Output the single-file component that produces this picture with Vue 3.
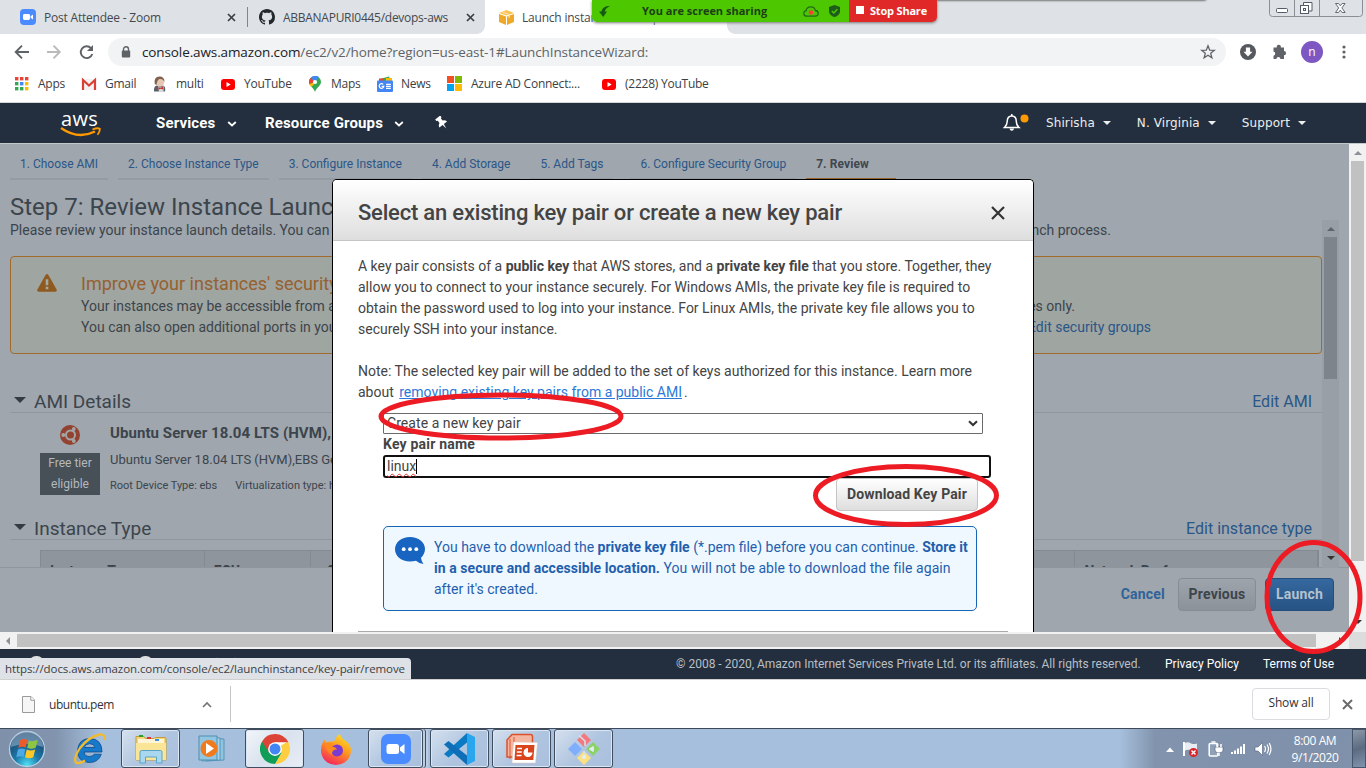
<script setup>
const bookmarks = [
  { t: 'Apps', i: 'apps', w: 67 },
  { t: 'Gmail', i: 'gmail', w: 71 },
  { t: 'multi', i: 'jenkins', w: 68 },
  { t: 'YouTube', i: 'yt', w: 87 },
  { t: 'Maps', i: 'maps', w: 70 },
  { t: 'News', i: 'news', w: 70 },
  { t: 'Azure AD Connect:...', i: 'ms', w: 154 },
  { t: '(2228) YouTube', i: 'yt', w: 120 }
]
const steps = ['1. Choose AMI', '2. Choose Instance Type', '3. Configure Instance', '4. Add Storage', '5. Add Tags', '6. Configure Security Group', '7. Review']
const appColors = ['#ea4335', '#ea4335', '#ea4335', '#34a853', '#4285f4', '#fbbc05', '#34a853', '#34a853', '#fbbc05']
const columns = [
  { t: 'Instance Type', w: 164 },
  { t: 'ECUs', w: 106 },
  { t: 'vCPUs', w: 766 },
  { t: 'Network Performance', w: 243 }
]
</script>

<template>
  <div class="screen">
    <header class="tabs">
      <div class="tab t1">
        <svg width="16" height="16"><rect width="16" height="16" rx="4" fill="#4a8cff"/><rect x="3" y="5" width="7" height="6" rx="1.4" fill="#fff"/><path d="M10.6 7.2 13 5.4v5.2l-2.4-1.8z" fill="#fff"/></svg>
        <span class="ttl">Post Attendee - Zoom</span>
        <svg class="tx" width="9" height="9"><path d="M1 1l7 7M8 1l-7 7" stroke="#3c4043" stroke-width="1.7"/></svg>
      </div>
      <div class="tab t2">
        <svg width="16" height="16" viewBox="0 0 16 16"><path fill="#24292e" d="M8 0C3.58 0 0 3.58 0 8c0 3.54 2.29 6.53 5.47 7.59.4.07.55-.17.55-.38 0-.19-.01-.82-.01-1.49-2.01.37-2.53-.49-2.69-.94-.09-.23-.48-.94-.82-1.13-.28-.15-.68-.52-.01-.53.63-.01 1.08.58 1.23.82.72 1.21 1.87.87 2.33.66.07-.52.28-.87.51-1.07-1.78-.2-3.64-.89-3.64-3.95 0-.87.31-1.59.82-2.15-.08-.2-.36-1.02.08-2.12 0 0 .67-.21 2.2.82.64-.18 1.32-.27 2-.27s1.36.09 2 .27c1.53-1.04 2.2-.82 2.2-.82.44 1.1.16 1.92.08 2.12.51.56.82 1.27.82 2.15 0 3.07-1.87 3.75-3.65 3.95.29.25.54.73.54 1.48 0 1.07-.01 1.93-.01 2.2 0 .21.15.46.55.38A8.01 8.01 0 0 0 16 8c0-4.42-3.58-8-8-8z"/></svg>
        <span class="ttl gh">ABBANAPURI0445/devops-aws</span>
        <svg class="tx" width="9" height="9"><path d="M1 1l7 7M8 1l-7 7" stroke="#3c4043" stroke-width="1.7"/></svg>
      </div>
      <div class="tab t3">
        <svg width="15" height="15"><path d="M0 3 7.5 0 15 3 7.5 5.5z" fill="#f9c451"/><path d="M0 4l7 2.4V15L0 12z" fill="#f0a927"/><path d="M15 4 8 6.4V15l7-3z" fill="#f0a927"/><path d="M4 1.5l7 3v3l-1.5.6V5L2.6 2.2z" fill="#fbe0a6"/></svg>
        <span class="ttl">Launch instance wizard | EC2 Man</span>
      </div>
      <div class="peek"></div>
      <div class="share">
        <div class="green">
          <svg width="11" height="11"><path d="M11 0C6 0 3 2 2.6 5.5H0L4.2 11 8 5.5H5.8C6 3.500 8 1.500 11 0z" fill="#155c12"/></svg>
          <b>You are screen sharing</b>
          <svg class="cloud" width="16" height="11"><path d="M4 10.200C1.500 10.200.8 8.500.8 7.500c0-1.500 1-2.500 2.200-2.600C3.300 2.500 5.200.8 7.800.8c2.500 0 4.200 1.500 4.600 3.700 1.800.2 2.800 1.400 2.800 2.900 0 1.600-1.200 2.800-3 2.800z" fill="none" stroke="#256b1c" stroke-width="1.300"/><circle cx="8" cy="6.500" r="2.200" fill="#ff3b3b"/></svg>
          <svg width="11" height="12"><path d="M5.500 0 11 2v4.200C11 9 8.500 11.200 5.500 12 2.500 11.200 0 9 0 6.200V2z" fill="#1f5d1a"/><path d="M2.800 6l2 2 3.500-3.800" fill="none" stroke="#4cc700" stroke-width="1.500"/></svg>
        </div>
        <div class="red"><i></i><b>Stop Share</b></div>
      </div>
      <div class="winctl">
        <svg width="94" height="17"><path d="M.5 0v13.500q0 3 3 3h87q3 0 3-3V0M25.500 0v16M50.500 0v16" fill="none" stroke="#8b8f95"/><rect x="7.500" y="8.500" width="11" height="4" rx="1" fill="#fff" stroke="#555b66"/><path d="M34.500 5V2.500h8.500v8.500h-3" fill="#fff" stroke="#555b66"/><rect x="31.500" y="5.500" width="8" height="8" fill="#fff" stroke="#555b66"/><rect x="34.500" y="8.500" width="2" height="2" fill="#fff" stroke="#555b66"/><path d="M66.500 3.500h3l1.800 2.300 1.800-2.300h3l-3.200 4.400 3.200 4.600h-3l-1.800-2.400-1.800 2.400h-3l3.200-4.600z" fill="#fff" stroke="#555b66" stroke-width=".9"/></svg>
      </div>
    </header>

    <div class="toolbar">
      <svg class="nv" width="90" height="16"><g fill="none" stroke-width="1.900"><path d="M15 8H2M8 1.700 1.700 8 8 14.300" stroke="#5f6368"/><path d="M33 8h12.500M39.500 1.700 45.800 8l-6.300 6.300" stroke="#bababa"/><path d="M77 4.200A5.900 5.900 0 1 0 78.300 10" stroke="#5f6368"/></g><path d="M79 1v6h-6z" fill="#5f6368"/></svg>
      <div class="omni">
        <svg width="10" height="12"><path d="M2.500 5V3.300a2.500 2.500 0 0 1 5 0V5" fill="none" stroke="#5f6368" stroke-width="1.400"/><rect x=".8" y="4.500" width="8.400" height="7" rx="1" fill="#5f6368"/></svg>
        <span class="url">console.aws.amazon.com<em>/ec2/v2/home?region=us-east-1#LaunchInstanceWizard:</em></span>
        <svg width="16" height="16"><path d="M8 1.800l1.700 4.400 4.600.2-3.600 2.900 1.200 4.500L8 11.300l-3.900 2.500 1.200-4.500L1.700 6.400l4.600-.2z" fill="none" stroke="#5f6368" stroke-width="1.300"/></svg>
      </div>
      <svg class="ext" width="112" height="24"><circle cx="12" cy="12" r="8" fill="#55585c"/><path d="M9.900 7.500h4.200v4.300h2.400L12 16.500l-4.500-4.700h2.400z" fill="#fff"/><path d="M38 7.500h2.800a2.100 2.100 0 1 1 4 0H48v3.600a2.100 2.100 0 1 1 0 4.200V19h-3.600a2 2 0 0 0-4 0H37.500v-3.300a2.200 2.200 0 0 0 0-4.300V7.500z" fill="#5f6368"/><circle cx="76" cy="12" r="11" fill="#7e57c2"/><circle cx="108" cy="7" r="1.600" fill="#5f6368"/><circle cx="108" cy="12" r="1.600" fill="#5f6368"/><circle cx="108" cy="17" r="1.600" fill="#5f6368"/><text x="76" y="16" text-anchor="middle" class="av">n</text></svg>
    </div>

    <nav class="bookmarks">
      <div v-for="(b, k) in bookmarks" :key="k" class="bm" :style="{ width: b.w + 'px' }">
        <svg width="16" height="16">
          <g v-if="b.i === 'apps'"><rect v-for="(c, n) in appColors" :key="n" :x="1 + (n % 3) * 5" :y="1 + Math.floor(n / 3) * 5" width="3.400" height="3.400" :fill="c"/></g>
          <g v-else-if="b.i === 'gmail'"><rect x="1" y="3" width="14" height="11" fill="#f2f2f2"/><path d="M2 14V4l6 5.500L14 4v10" fill="none" stroke="#d93f34" stroke-width="2.200"/></g>
          <g v-else-if="b.i === 'jenkins'"><path d="M2 15.500Q1.500 10 5 9.500h6q3 1 2 6z" fill="#59606b"/><ellipse cx="8" cy="5.800" rx="4.300" ry="5" fill="#e6c8b2"/><path d="M2.800 8Q1.500.8 7.500.5q5 0 5 5.500Q11 2.500 7.500 3 5 4 4.500 9z" fill="#80604f"/><path d="M6 10l2.500 1.500 3-1.500v6H7z" fill="#d8d8d8"/><path d="M6.500 11l2 1 2.500-1.500v3l-2.500-.8-2 1z" fill="#c9332b"/></g>
          <g v-else-if="b.i === 'yt'"><rect x="1" y="3" width="14" height="11" rx="3" fill="#f00"/><path d="M6.500 6v5L10.700 8.500z" fill="#fff"/></g>
          <g v-else-if="b.i === 'maps'"><path d="M2 6a6 6 0 0 1 12 0c0 4-4.500 5-6 10C6.500 11 2 10 2 6z" fill="#34a853"/><path d="M8 0a6 6 0 0 0-4.500 2L8 6l4-5A6 6 0 0 0 8 0z" fill="#4285f4"/><path d="M3.500 2A6 6 0 0 0 2.300 8L8 6z" fill="#ea4335"/><path d="M2.300 8Q3 9.500 4.500 11L9 6z" fill="#fbbc04"/><circle cx="8" cy="6" r="2.100" fill="#fff"/></g>
          <g v-else-if="b.i === 'news'"><path d="M3 3l9-2.500L14 5H3z" fill="#34a853"/><path d="M9 2h6v4H9z" fill="#fbbc04"/><path d="M2 2.500h5V6H2z" fill="#ea4335"/><rect y="4.500" width="16" height="11.500" rx="1" fill="#4285f4"/><path d="M6.200 8.400A2.300 2.300 0 1 0 6.800 10.300H4.700M9 8.300h4.800M9 10.300h4.800M9 12.300h4.800" stroke="#fff" stroke-width="1.200" fill="none"/></g>
          <g v-else><path d="M0 0h7v7H0z" fill="#f25022"/><path d="M8 0h7v7H8z" fill="#7fba00"/><path d="M0 8h7v7H0z" fill="#00a4ef"/><path d="M8 8h7v7H8z" fill="#ffb900"/></g>
        </svg>
        <span>{{ b.t }}</span>
      </div>
    </nav>

    <nav class="aws">
      <div class="logo"><span>aws</span><svg width="42" height="12"><path d="M1 1q17 12 34 3.500" fill="none" stroke="#f90" stroke-width="2.300"/><path d="M32.500 2.500q5-2 7.300-.8 .3 2.800-2.300 6" fill="none" stroke="#f90" stroke-width="1.800"/></svg></div>
      <b class="sv">Services</b>
      <svg class="c1" width="10" height="6"><path d="M1.200 1 5 4.500 8.800 1" fill="none" stroke="#fff" stroke-width="1.700"/></svg>
      <b class="rg">Resource Groups</b>
      <svg class="c2" width="10" height="6"><path d="M1.200 1 5 4.500 8.800 1" fill="none" stroke="#fff" stroke-width="1.700"/></svg>
      <svg width="14" height="14"><path transform="rotate(-38 7 7)" d="M3.800 0h6.400v2L9 2.700v2.800q2.500 1 2.800 3.500H7.800L7 14l-.8-5H2.200Q2.500 6.500 5 5.500V2.700L3.800 2z" fill="#fff"/></svg>
      <div class="rt">
        <svg class="bell" width="30" height="20"><path d="M1.500 14.500h14.500q-2.700-2.500-2.700-6 0-5.500-4.500-5.500T4.200 8.500q0 3.500-2.700 6z" fill="none" stroke="#fff" stroke-width="1.500"/><path d="M8.800 1v2" stroke="#fff" stroke-width="1.500"/><path d="M6.500 15.500h4.600q-.5 2.300-2.300 2.300t-2.300-2.300z" fill="#fff"/><circle cx="21.500" cy="5.500" r="4" fill="#f90"/></svg>
        <span>Shirisha</span><i></i><span>N. Virginia</span><i></i><span>Support</span><i></i>
      </div>
    </nav>

    <main class="page">
      <div class="dim">
        <div class="steps"><span v-for="(s, k) in steps" :key="k" :class="{ cur: k === 6, sec6: k === 5 }">{{ s }}</span></div>
        <h1>Step 7: Review Instance Launch</h1>
        <p class="sub"><span>Please review your instance launch details. You can go</span><span class="tail">launch process.</span></p>
        <div class="scroller">
          <div class="warn">
            <svg width="20" height="18"><path d="M8.600 1Q10-.8 11.400 1L19.600 15.500q.6 2-1.300 2.300H1.700Q-.2 17.500.4 15.500z" fill="#8f5a20"/><path d="M8.700 5.200h2.600v6H8.700zM8.700 12.700h2.600v2.600H8.700z" fill="#a3aaa5"/></svg>
            <div class="wt">
              <h2>Improve your instances' security.</h2>
              <div class="row"><span>Your instances may be accessible from any</span><span class="end1">addresses only.</span></div>
              <div class="row"><span>You can also open additional ports in your</span><span class="end2">Edit security groups</span></div>
            </div>
          </div>
          <div class="sec s1"><i></i><h3>AMI Details</h3><a>Edit AMI</a></div>
          <div class="ami">
            <div class="badge">
              <svg width="20" height="20"><circle cx="10" cy="10" r="10" fill="#93422f"/><circle cx="10.500" cy="10" r="4.500" fill="none" stroke="#a3a5a7" stroke-width="2"/><circle cx="3.300" cy="10" r="1.900" fill="#a3a5a7"/><circle cx="13.800" cy="4" r="1.900" fill="#a3a5a7"/><circle cx="13.800" cy="16" r="1.900" fill="#a3a5a7"/></svg>
              <div>Free tier<br>eligible</div>
            </div>
            <div class="info">
              <b>Ubuntu Server 18.04 LTS (HVM),</b>
              <p>Ubuntu Server 18.04 LTS (HVM),EBS General</p>
              <small><span>Root Device Type: ebs</span><span>Virtualization type: hvm</span></small>
            </div>
          </div>
          <div class="sec s2"><i></i><h3>Instance Type</h3><a>Edit instance type</a></div>
          <div class="thead"><b v-for="c in columns" :key="c.t" :style="{ width: c.w + 'px' }">{{ c.t }}</b></div>
        </div>
        <div class="actions"><a>Cancel</a><span class="btn">Previous</span><span class="btn blue">Launch</span></div>
        <div class="inscroll"><i class="up"></i><div></div><i class="dn"></i></div>
      </div>
      <div class="vscroll"><i class="up"></i><div></div><i class="dn"></i></div>

      <section class="modal">
        <div class="mh"><h2>Select an existing key pair or create a new key pair</h2><svg width="14" height="14"><path d="M1 1l12 12M13 1 1 13" stroke="#333" stroke-width="2.200"/></svg></div>
        <div class="mb">
          <p>A key pair consists of a <b>public key</b> that AWS stores, and a <b>private key file</b> that you store. Together, they<br>allow you to connect to your instance securely. For Windows AMIs, the private key file is required to<br>obtain the password used to log into your instance. For Linux AMIs, the private key file allows you to<br>securely SSH into your instance.</p>
          <p class="note">Note: The selected key pair will be added to the set of keys authorized for this instance. Learn more<br>about <a>removing existing key pairs from a public AMI</a><span class="dot">.</span></p>
          <div class="form">
            <div class="select"><span>Create a new key pair</span><svg width="10" height="7"><path d="M1 1.200l4 3.800 4-3.800" fill="none" stroke="#333" stroke-width="2"/></svg></div>
            <label>Key pair name</label>
            <div class="input"><span>linux</span><i></i></div>
            <span class="dl">Download Key Pair</span>
            <div class="tip">
              <svg width="30" height="28"><path d="M15 0C23.500 0 30 5.300 30 12c0 3.500-1.600 6.500-4 8.700q.3 3.500 2.500 6.300-4.500-.5-7.500-3.300Q18 24.500 15 24.500C6.500 24.500 0 19 0 12.200 0 5.300 6.500 0 15 0z" fill="#1765c0"/><circle cx="8.700" cy="12.200" r="1.900" fill="#fff"/><circle cx="15" cy="12.200" r="1.900" fill="#fff"/><circle cx="21.300" cy="12.200" r="1.900" fill="#fff"/></svg>
              <p>You have to download the <b>private key file</b> (*.pem file) before you can continue. <b>Store it</b><br><span class="l2"><b>in a secure and accessible location.</b> You will not be able to download the file again</span><br>after it's created.</p>
            </div>
          </div>
          <hr>
        </div>
      </section>
    </main>

    <div class="hscroll"><i class="lf"></i><div></div><i class="rgt"></i><span></span></div>

    <footer class="foot">
      <div class="fl"><i></i><b>Feedback</b><i></i><b>English (US)</b></div>
      <span class="cp">© 2008 - 2020, Amazon Internet Services Private Ltd. or its affiliates. All rights reserved.</span>
      <span class="pp">Privacy Policy</span><span class="tu">Terms of Use</span>
      <div class="status">https://docs.aws.amazon.com/console/ec2/launchinstance/key-pair/remove</div>
    </footer>

    <div class="shelf">
      <svg width="13" height="17"><path d="M.5.500h8.500l3.500 3.500v12.500H.5z" fill="#f6f6f6" stroke="#9a9a9a"/><path d="M8.800.5V4.300h3.700" fill="#fff" stroke="#9a9a9a"/></svg>
      <span class="fn">ubuntu.pem</span>
      <svg class="cv" width="10" height="7"><path d="M1 6l4-4 4 4" fill="none" stroke="#757575" stroke-width="1.700"/></svg>
      <div class="sep"></div>
      <div class="showall">Show all</div>
      <svg class="sx" width="11" height="11"><path d="M1 1l9 9M10 1l-9 9" stroke="#6b6b6b" stroke-width="2"/></svg>
    </div>

    <div class="taskbar">
      <svg class="orb" width="38" height="38" viewBox="0 0 38 38">
        <defs><radialGradient id="og" cx=".5" cy=".95" r=".9"><stop offset="0" stop-color="#4fe0f5"/><stop offset=".4" stop-color="#1d78a8"/><stop offset="1" stop-color="#1c3c63"/></radialGradient></defs>
        <circle cx="19" cy="19" r="17.500" fill="url(#og)" stroke="#b8cfe0" stroke-width="1.300"/><path d="M3 17a16 16 0 0 1 32 0q-16-6-32 0z" fill="#a8c4da" opacity=".5"/>
        <path d="M12 10.500q3.500-2.500 7.300-.5l-1.600 7.700q-3.500-1.800-7.400.2z" fill="#f0592a"/><path d="M20.800 10.500q3.500 1.700 8.900-.8l-2 8q-4.500 2-8.500 0z" fill="#8fc641"/><path d="M9.900 19.500q3.500-2 7.400-.2l-1.800 7.700q-3.500-1.600-7.200.3z" fill="#4ba9e6"/><path d="M18.700 19.600q4 1.800 8.500 0l-1.900 7.600q-4 2-8.300 0z" fill="#fdc826"/>
      </svg>
      <svg class="ie" width="36" height="34" viewBox="0 0 36 34"><path d="M31 20H13q.5 4.500 5.500 4.500 3 0 4.800-2.300h7Q27.500 30.500 18.500 30.500 6.500 30 6.500 18.500 7.500 6.500 19 6.500q12 .5 12 13.500zM13.300 15.500h10.500q-.6-3.800-5.200-3.800-4.500.2-5.300 3.800z" fill="#1779c9" stroke="#0b4a8c" stroke-width=".8"/><path d="M33 8Q34.500 2 29 2.500 18 4.500 9 16 2 27 5 30.500q3 2 9-2" fill="none" stroke="#f2bb2d" stroke-width="2.300"/></svg>
      <div class="tb expl"><svg width="34" height="32" viewBox="0 0 34 32"><path d="M2 3.500h8l1.500 2H20l1-1h10q1 0 1 1V27H2z" fill="#f3d678" stroke="#c29c3a"/><path d="M4 6h26v4H4z" fill="#fdf5d6"/><path d="M2 10h30v17H2z" fill="#fae596"/><path d="M5 2h4v2H5z" fill="#25a028"/><path d="M13 4h4v2h-4z" fill="#d33"/><path d="M21 6h4v2h-4z" fill="#3a8ee6"/><path d="M6 30V19q0-1.500 1.500-1.500h19q1.500 0 1.500 1.500v11h-5.500v-6h-11v6z" fill="#a9d7ee" stroke="#5aa3c8"/></svg></div>
      <svg class="wmp" width="30" height="28" viewBox="0 0 30 28"><path d="M8 3l18 1v21L8 26z" fill="#8fc4e0" stroke="#5a94b8"/><path d="M4 2l18 1v22L4 26z" fill="#a9d5ec" stroke="#5a94b8"/><path d="M1 1h18v24H1z" fill="#91c5e0" stroke="#4e8fb5"/><circle cx="11" cy="13.500" r="8.500" fill="#f07a1e"/><path d="M8 8v11l8-5.500z" fill="#fff"/></svg>
      <div class="tb chr on"><svg width="30" height="30" viewBox="0 0 48 48"><circle cx="24" cy="24" r="24" fill="#fff"/><path d="M24 24 44.800 12A24 24 0 0 1 24 48L34 30z" fill="#ffcd40"/><path d="M24 24 3.200 12A24 24 0 0 0 24 48L34.400 30z" fill="#0f9d58"/><path d="M24 13h21.300A24 24 0 0 0 3.200 12L14.500 29.500z" fill="#db4437"/><circle cx="24" cy="24" r="11" fill="#fff"/><circle cx="24" cy="24" r="8.800" fill="#4285f4"/></svg></div>
      <svg class="ff" width="32" height="32" viewBox="0 0 32 32"><defs><linearGradient id="fg" x1=".8" y1="0" x2=".3" y2="1"><stop offset="0" stop-color="#ffe226"/><stop offset=".45" stop-color="#ff9a1f"/><stop offset="1" stop-color="#f5225d"/></linearGradient></defs><path d="M20 1q1 4 5 6.500 6 4 6 10A15 14.500 0 0 1 1 17.500Q1 11 4.500 6.500q.5 2 2 3Q8 8 11 8.500 15 9 16 5 17 2 20 1z" fill="url(#fg)"/><circle cx="17" cy="17.500" r="6" fill="#7a3bd0"/><path d="M5 11q6-3 9 1l-2 1.500q4 .5 5 3-3-.5-4 1.500-2 2 0 4-7-2-8-11z" fill="#ff8a1e"/></svg>
      <div class="tb zm"><svg width="30" height="30"><rect width="30" height="30" rx="7" fill="#4a8cff"/><rect x="5.500" y="10" width="12.500" height="10" rx="2.500" fill="#fff"/><path d="M19 13.500l4.500-3.500v10L19 16.500z" fill="#fff"/></svg></div>
      <div class="tb vs"><svg width="32" height="32" viewBox="0 0 32 32"><path d="M23 0l8 4v24l-8 4z" fill="#2aa6ee"/><path d="M23 0v9.500L4.500 24.500 0 21z" fill="#0a7ac4"/><path d="M23 32v-9.500L4.500 8 0 11.500z" fill="#0e6fb8"/></svg></div>
      <div class="tb pp2"><svg width="32" height="32" viewBox="0 0 32 32"><path d="M6 1.500h18.500q2 0 2 2V24H1V7z" fill="#f3b6a0" stroke="#d9522d" stroke-width="1.500"/><path d="M4 6v20M8 4v20" stroke="#e2552f"/><path d="M7.500 9l24 .5-2 20.500H6z" fill="#fff" stroke="#e3c6bb" stroke-width=".5"/><path d="M9.500 12h19l-1.200 15H8.500z" fill="#d9441c"/><path d="M11 15.500h5M10.800 19h5M10.600 22.500h5" stroke="#fff" stroke-width="1.500"/><path d="M22 15a4.500 4.500 0 1 0 4.500 4.500H22z" fill="#fff"/></svg></div>
      <div class="tb gt"><svg width="32" height="32" viewBox="0 0 32 32"><path d="M16 0l7 7-7 7-7-7z" fill="#f3797e"/><path d="M25 9l7 7-7 7-7-7z" fill="#8cd268"/><path d="M7 9l7 7-7 7-7-7z" fill="#7eaefc"/><path d="M16 18l7 7-7 7-7-7z" fill="#fbe180"/><path d="M11 2.500l6 5.500v5M25 13v6M21 16h5M16 18v8" fill="none" stroke="#d8e3ee" stroke-width="1.500"/><circle cx="24" cy="16" r="2" fill="#e6eef4"/><circle cx="16" cy="24" r="2" fill="#e6eef4"/></svg></div>
      <svg class="tray" width="112" height="18"><path d="M0 12l4-4.500 4 4.500z" fill="#fff"/><path d="M18 2v14" stroke="#fff" stroke-width="2"/><path d="M19 3q3-1.500 6 .5 3 1 6 0v7q-3 1-6 0-3-1.500-6 0z" fill="#e8edf4"/><circle cx="27.500" cy="12.500" r="4.500" fill="#d9262b"/><path d="M25.500 10.500l4 4M29.500 10.500l-4 4" stroke="#fff" stroke-width="1.400"/><rect x="43.200" y="3.500" width="8.500" height="12.500" rx="1" fill="#8fa0b7" stroke="#fff" stroke-width="1.500"/><path d="M45.500 2h4" stroke="#fff" stroke-width="1.500"/><path d="M49 7h8v3q0 2.500-2.500 2.500h-3Q49 12.500 49 10z" fill="#fff" stroke="#4b5b74" stroke-width=".6"/><path d="M51 4v3M55 4v3M53 12.500V16" stroke="#fff" stroke-width="1.500"/><path d="M66 12v2M69 10.500v3.500M72 8.500V14M75 6.500V14M78 4v10" stroke="#fff" stroke-width="2"/><path d="M89 7h3l4.500-4.500v13L92 11h-3z" fill="#fff" stroke="#50607a" stroke-width=".6"/><path d="M98.500 6q2 3 0 6M101 4.500q3 4.500 0 9M103.200 3q3.500 6 0 12" fill="none" stroke="#fff" stroke-width="1.200"/></svg>
      <div class="clock">8:00 AM<br>9/1/2020</div>
      <div class="desk"></div>
    </div>

    <svg class="marks" width="1366" height="768"><g fill="none" stroke="#ed1c24" stroke-width="5"><ellipse cx="501" cy="416.500" rx="120" ry="21.500"/><ellipse cx="906" cy="495.500" rx="90.500" ry="29"/><ellipse cx="1313.500" cy="597" rx="46.500" ry="54.500"/></g></svg>
  </div>
</template>

<style>
body { margin: 0; overflow: hidden; }
</style>
<style scoped>
* { box-sizing: border-box; }
p, h1, h2, h3 { margin: 0; font-weight: 400; }
svg { display: block; flex: none; }
b { font-weight: 700; }
.screen { position: relative; width: 1366px; height: 768px; overflow: hidden; background: #fff; font-family: Roboto, sans-serif; color: #444; white-space: nowrap; display: flex; flex-direction: column; }
.screen > * { flex: none; }

.tabs { position: relative; height: 34px; background: #dee1e6; display: flex; font: 12px "Open Sans", sans-serif; letter-spacing: -.21px; color: #45494d; }
.tab { display: flex; align-items: center; height: 34px; }
.ttl { margin-left: 8px; flex: 1; overflow: hidden; }
.gh { letter-spacing: -.27px; }
.t1 { width: 248px; padding-left: 20px; position: relative; }
.t1::after { content: ""; width: 1px; height: 20px; background: #80868b; margin-left: 11px; }
.t2 { width: 237px; padding: 0 10px 0 11px; }
.t3 { width: 242px; padding-left: 14px; background: #fff; position: relative; }
.t3::before, .t3::after { content: ""; position: absolute; bottom: 0; width: 8px; height: 8px; }
.t3::before { left: -8px; background: radial-gradient(circle at 0 0, transparent 7.500px, #fff 8px); }
.t3::after { right: -8px; background: radial-gradient(circle at 100% 0, transparent 7.500px, #fff 8px); }
.peek { position: absolute; left: 777px; top: -7px; width: 430px; height: 7px; background: #aaa; border-radius: 4px; box-shadow: 0 1px 2px #777; }
.share { position: absolute; left: 592px; top: 0; height: 22px; display: flex; border-radius: 0 0 5px 5px; overflow: hidden; box-shadow: 0 1px 3px #777; font-size: 11px; letter-spacing: 0; }
.green { width: 257px; background: #4cc700; color: #1c3f16; display: flex; align-items: center; padding-left: 7px; }
.green b { margin: -2px 0 0 32px; width: 125px; }
.cloud { margin: 0 10px 0 36px; }
.red { width: 88px; background: #e02828; color: #fff; display: flex; align-items: center; padding: 0 0 2px 7px; letter-spacing: -.19px; }
.red i { width: 8px; height: 8px; background: #fff; margin-right: 6px; }
.winctl { position: absolute; left: 1269px; top: 0; }

.toolbar { height: 34px; display: flex; align-items: center; padding: 2px 0 0 14px; }
.omni { margin-left: 4px; width: 1118px; height: 28px; border-radius: 14px; background: #f1f3f4; display: flex; align-items: center; padding: 0 10px 0 13px; }
.url { flex: 1; margin-left: 11px; font: 13.500px "Open Sans", sans-serif; letter-spacing: -.11px; color: #202124; }
.url em { font-style: normal; color: #5f6368; }
.ext { margin-left: 10px; }
.av { font: 12px "Open Sans", sans-serif; fill: #fff; }

.bookmarks { height: 35px; padding: 0 0 3px 14px; display: flex; align-items: center; border-bottom: 1px solid #d5d5d8; font: 12px "Open Sans", sans-serif; letter-spacing: -.24px; color: #3c4043; }
.bm { display: flex; align-items: center; gap: 8px; }

.aws { height: 41px; background: #232f3e; border-bottom: 1px solid #c4c8cc; display: flex; align-items: center; padding-left: 60px; color: #fff; font-size: 15px; letter-spacing: .15px; }
.logo { width: 42px; margin-top: 2px; }
.logo span { display: block; font: 20px/20px "Open Sans", sans-serif; letter-spacing: .3px; margin-left: 1px; }
.logo svg { margin-top: -2px; }
.sv { margin-left: 54px; width: 59px; }
.c1 { margin: 2px 28px 0 12px; }
.rg { width: 119px; }
.c2 { margin: 2px 31px 0 10px; }
.rt { flex: 1; display: flex; align-items: center; padding-left: 554px; font: 12px "DejaVu Sans", sans-serif; letter-spacing: .1px; color: #eee; }
.bell { margin-right: 13px; }
.rt i { border: 4px solid transparent; border-top: 4px solid #eee; border-bottom: 0; margin: 0 26px 0 8px; }

.page { position: relative; height: 488px; display: flex; }
.dim { position: relative; width: 1349px; background: #9fa6ad; color: #3c444c; overflow: hidden; }
.steps { display: flex; gap: 10px; padding-left: 10px; height: 36px; font-size: 12px; color: #2a5688; }
.steps span { padding: 0 10px; line-height: 40px; height: 36px; border-bottom: 2px solid #949ba3; }
.steps .sec6 { margin-left: 7px; }
.steps .cur { padding-right: 27px; border-color: #94622b; font-weight: 700; color: #3f474f; letter-spacing: .1px; }
h1 { font-size: 24px; line-height: 28px; margin: 13px 0 0 10px; }
.sub { font-size: 14px; line-height: 18px; padding-left: 10px; width: 1111px; display: flex; justify-content: space-between; }
.scroller { height: 329px; padding-left: 10px; border-bottom: 1px solid #8f969d; overflow: hidden; }
.warn { margin-top: 17px; width: 1312px; height: 98px; border: 1px solid #a06b2c; border-radius: 4px; background: #9fa5a1; padding: 17px 0 0 26px; display: flex; gap: 24px; }
.wt h2 { font-size: 18px; line-height: 20px; margin-bottom: 2px; color: #96602f; }
.row { width: 1070px; font-size: 14px; line-height: 21px; display: flex; justify-content: space-between; }
.end1 { margin-right: 76px; }
.end2 { color: #2a5688; }
.sec { width: 1312px; display: flex; align-items: center; border-bottom: 1px solid #8f969d; height: 24px; padding-top: 1px; }
.sec i { border: 6px solid transparent; border-top: 6px solid #333b43; border-bottom: 0; margin: -2px 8px 0 4px; }
.sec h3 { font-size: 19px; flex: 1; }
.sec a { font-size: 16px; color: #2a5688; margin-right: 10px; }
.s1 { margin-top: 35px; }
.ami { display: flex; padding: 12px 0 0 30px; height: 102px; }
.badge { width: 60px; font-size: 12px; text-align: center; color: #b3b9bf; }
.badge svg { margin: 0 auto 8px; }
.badge div { height: 42px; line-height: 21px; background: #485057; }
.info { margin-left: 10px; }
.info b { display: block; font-size: 15px; line-height: 18px; letter-spacing: .07px; margin-top: -1px; }
.info p { font-size: 13px; line-height: 18px; margin-top: 9px; }
.info small { display: block; font-size: 11px; line-height: 16px; margin-top: 9px; }
.info small span { margin-right: 18px; }
.s2 { margin-top: 1px; }
.thead { display: flex; margin: 10px 0 0 30px; width: 1279px; height: 30px; background: #8e959c; border: 1px solid #838a92; font-size: 14px; }
.thead b { padding: 11px 0 0 9px; border-right: 1px solid #838a92; line-height: 18px; }
.actions { display: flex; align-items: center; justify-content: flex-end; margin-top: 10px; height: 33px; padding-right: 15px; font-size: 14px; font-weight: 700; letter-spacing: .2px; }
.actions a { color: #2f6399; margin: -1px 13px 0 0; }
.btn { width: 78px; height: 33px; line-height: 31px; text-align: center; border: 1px solid #858c94; border-radius: 4px; background: linear-gradient(#9da4ab, #8c9299); }
.blue { margin-left: 9px; width: 69px; color: #b5c1cd; background: linear-gradient(#35689f, #275384); border-color: #234d7a; }
.inscroll { position: absolute; left: 1322px; top: 76px; width: 17px; height: 348px; background: #989fa6; padding: 7px 2px 0; }
.inscroll div { height: 142px; margin-top: 6px; background: #7d848b; }
.up, .dn { display: block; width: 0; margin: 0 auto; border: 4px solid transparent; }
.up { border-top: 0; border-bottom-color: #8d9197; }
.inscroll .up { border-bottom-color: #5d646b; }
.dn { border-bottom: 0; border-top-color: #333; }
.inscroll .dn { margin-top: 177px; }
.vscroll { width: 17px; background: #f1f1f1; padding: 7px 2px 0; }
.vscroll div { height: 400px; margin-top: 6px; background: #c1c1c1; }
.vscroll .dn { margin-top: 59px; }

.modal { position: absolute; left: 332px; top: 35px; width: 702px; height: 453px; border: 1px solid #000; border-bottom: 0; border-radius: 5px 5px 0 0; background: #fff; overflow: hidden; }
.mh { height: 61px; border-bottom: 1px solid #c5c5c5; background: linear-gradient(#fff, #dedede); display: flex; align-items: center; justify-content: space-between; padding: 5px 28px 0 25px; }
.mh h2 { font-size: 22px; font-weight: 500; letter-spacing: -.2px; }
.mb { padding: 15px 25px 0; font-size: 14px; line-height: 21px; }
.mb > p { margin-bottom: 21px; }
.mb > p.note { margin-bottom: 10px; }
.note a { color: #2b78d8; text-decoration: underline; margin-left: 2px; }
.dot { margin-left: 2px; }
.form { padding-left: 25px; }
.select { width: 600px; height: 21px; line-height: 19px; border: 1px solid #6b6b6b; border-radius: 1px; padding: 0 4px 0 3px; display: flex; justify-content: space-between; align-items: center; letter-spacing: .06px; }
.select span { margin-top: -1px; }
label { display: block; font-weight: 700; line-height: 21px; letter-spacing: .2px; }
.input { width: 608px; height: 23px; border: 2px solid #101010; border-radius: 3px; display: flex; align-items: center; padding-left: 2px; }
.input span { text-decoration: underline wavy #e33 1px; text-decoration-skip-ink: none; text-underline-offset: 2px; line-height: 19px; }
.input i { width: 1px; height: 15px; background: #000; }
.dl { display: block; margin-left: 453px; width: 142px; height: 33px; line-height: 31px; text-align: center; border: 1px solid #c4c4c4; border-radius: 4px; background: linear-gradient(#fff, #dedede); font-weight: 700; letter-spacing: .14px; }
.tip { margin-top: 15px; width: 594px; height: 85px; border: 1px solid #1765b5; border-radius: 5px; background: #f0f8ff; color: #1f5fae; display: flex; gap: 9px; padding: 10px 0 0 11px; }
.l2 { letter-spacing: .065px; }
hr { margin: 20px 0 0; border: 0; height: 1px; background: #aaa; width: 650px; }

.hscroll { height: 17px; background: #f1f1f1; display: flex; align-items: center; padding-left: 6px; }
.hscroll i { border: 4px solid transparent; }
.lf { border-left: 0 !important; border-right-color: #8d9197 !important; }
.hscroll div { margin-left: 7px; width: 1299px; height: 13px; background: #c1c1c1; }
.rgt { margin-left: 23px; border-right: 0 !important; border-left-color: #444 !important; }
.hscroll span { margin-left: auto; width: 17px; height: 17px; background: #dcdcdc; }

.foot { position: relative; height: 30px; background: #232f3e; display: flex; align-items: center; color: #fff; font-size: 12px; }
.fl { display: flex; width: 676px; padding-left: 29px; font-size: 13px; margin-top: -2px; }
.fl i { width: 15px; height: 14px; border-radius: 7px; background: #ddd; }
.fl b { margin: 0 21px 0 17px; }
.fl i + b + i + b { margin-left: 14px; }
.cp { color: #b9bfc5; width: 489px; }
.pp { width: 98px; }
.status { position: absolute; left: 0; bottom: 0; width: 411px; height: 21px; line-height: 21px; background: #dee1e6; border-radius: 0 4px 0 0; padding-left: 5px; color: #3c4043; font-family: "Open Sans", sans-serif; font-size: 11.500px; letter-spacing: -.08px; }

.shelf { height: 49px; border-top: 1px solid #d0d0d0; display: flex; align-items: center; padding-left: 22px; font: 12px "Open Sans", sans-serif; letter-spacing: -.45px; color: #333; }
.fn { margin-left: 14px; width: 65px; }
.cv { margin-left: 88px; }
.sep { width: 1px; height: 36px; margin-left: 18px; background: #c6c6c6; }
.showall { margin-left: auto; width: 78px; height: 32px; line-height: 28px; text-align: center; border: 1px solid #dadce0; border-radius: 4px; letter-spacing: -.16px; }
.sx { margin: 0 13px 0 12px; }

.taskbar { height: 40px; border-top: 1px solid #3e4a59; display: flex; align-items: center; background: linear-gradient(90deg, #7f91aa 0, #8193ad 55px, #a6bfdc 100px, #a6bfdc 1120px, #8294ad 1155px, #7f91aa); }
.orb { margin-left: 8px; }
.ie { margin: 0 14px 0 25px; }
.tb { width: 59px; height: 39px; border: 1px solid #3f4d5e; border-radius: 3px; box-shadow: inset 0 0 0 1px #dbe6f2; background: linear-gradient(135deg, #d4e0ee, #afc4df 55%, #a9c0dd); display: flex; align-items: center; justify-content: center; margin-right: 3px; }
.on { background: linear-gradient(135deg, #f2f6fa, #d9e2ee 50%, #e8eef6); }
.wmp { margin: 0 17px 0 15px; }
.ff { margin: 0 16px 0 13px; }
.zm { width: 55px; margin-right: 7px; box-shadow: inset 0 0 0 1px #dbe6f2, 2px 0 #bccde2, 3px 0 #3f4d5e, 5px 0 #bccde2; }
.tray { margin: 0 2px 0 auto; }
.clock { width: 72px; text-align: center; font: 12px/17px "Open Sans", sans-serif; color: #fff; letter-spacing: -.4px; padding-right: 2px; }
.desk { width: 14px; height: 39px; border: 1px solid #46566b; background: linear-gradient(160deg, #8c99aa, #5c6b80 50%, #8094ae); }
.marks { position: absolute; left: 0; top: 0; }
</style>
